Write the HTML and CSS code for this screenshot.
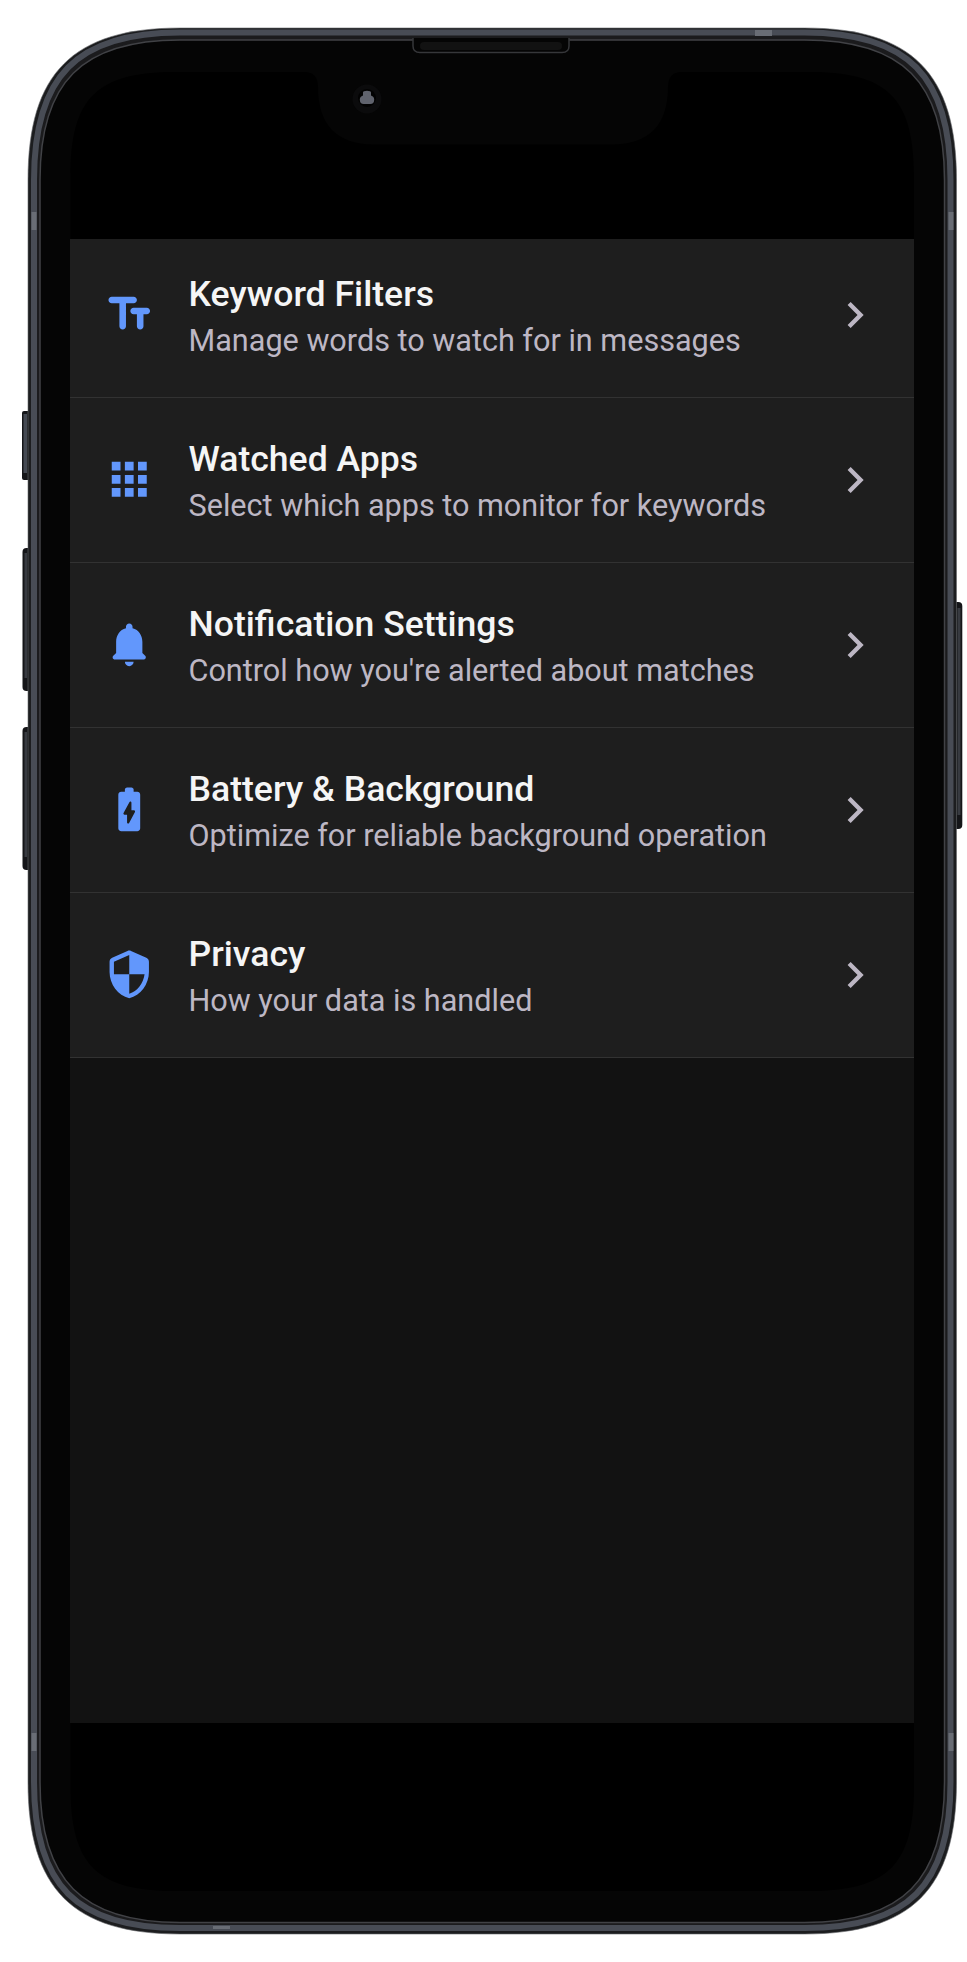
FILE: index.html
```html
<!DOCTYPE html>
<html lang="en">
<head>
<meta charset="utf-8">
<title>Settings</title>
<link rel="stylesheet" href="styles.css">
</head>
<body>
<div class="device">
  <svg class="frame" viewBox="0 0 967 1962" aria-hidden="true">
    <g class="buttons">
      <rect x="22" y="411" width="10" height="69" rx="2"/>
      <rect x="22.5" y="548" width="10" height="143" rx="4"/>
      <rect x="22.5" y="727" width="10" height="143" rx="4"/>
      <rect x="952" y="602" width="10.3" height="227" rx="4"/>
    </g>
    <g class="button-faces">
      <rect x="23.5" y="414" width="3.5" height="59"/>
      <rect class="dim" x="24.5" y="553" width="2.5" height="125"/>
      <rect class="dim" x="24.5" y="732" width="2.5" height="125"/>
      <rect class="dim" x="957.5" y="608" width="3" height="207"/>
    </g>
    <path class="edge" d="M28 180C28 73 73 28 180 28H804.500C911.500 28 956.500 73 956.500 180V1782C956.500 1889 911.500 1934 804.500 1934H180C73 1934 28 1889 28 1782Z"/>
    <path class="band" d="M34 180C34 76.500 76.500 32.500 180 32.500H804.500C908 32.500 950.500 76.500 950.500 180V1782C950.500 1885.500 908 1928 804.500 1928H180C76.500 1928 34 1885.500 34 1782Z"/>
    <path class="lip" d="M40 180C40 82 82 40 180 40H804.500C902.500 40 944.500 82 944.500 180V1782C944.500 1880 902.500 1922.500 804.500 1922.500H180C82 1922.500 40 1880 40 1782Z"/>
    <g class="antenna">
      <rect x="31.500" y="212" width="5" height="18"/>
      <rect x="948.500" y="212" width="5" height="18"/>
      <rect x="31.500" y="1733" width="5" height="18"/>
      <rect x="948.500" y="1733" width="5" height="18"/>
      <rect x="755" y="30" width="17" height="6"/>
      <rect x="213" y="1926" width="17" height="3"/>
    </g>
    <path class="glass" d="M70.500 177C70.500 98 96.500 72 175.500 72H304Q318 72 318 87C318 124 336 144.500 374 144.500H612C650 144.500 668 124 668 87Q668 72 682 72H809C888 72 914 98 914 177V1786C914 1865 888 1891 809 1891H175.500C96.500 1891 70.500 1865 70.500 1786Z"/>
    <path class="speaker" d="M413 38V46Q413 52.500 420 52.500H562Q569 52.500 569 46V38"/>
    <rect class="mesh" x="420" y="42" width="142" height="8" rx="4"/>
    <circle class="lens-ring" cx="367" cy="99" r="14.500"/>
    <circle class="lens" cx="367" cy="98" r="9"/>
    <path class="glint" d="M363 92.500q0-1.800 4-1.800t4 1.800v3q3.200 1 3.200 4 0 4.500-4 4.500h-6.400q-4 0-4-4.500 0-3 3.200-4z"/>
  </svg>

  <main class="screen">
    <ul class="list">
      <li class="row">
        <svg class="icon" viewBox="0 0 24 24"><path d="M2.500 5.500C2.500 6.330 3.170 7 4 7h3.500v10.500c0 .83.67 1.500 1.500 1.500s1.500-.67 1.500-1.500V7H14c.83 0 1.500-.67 1.500-1.500S14.830 4 14 4H4c-.83 0-1.500.67-1.500 1.500zM20 9h-6c-.83 0-1.500.67-1.500 1.500S13.170 12 14 12h1.500v5.500c0 .83.67 1.500 1.500 1.500s1.500-.67 1.500-1.500V12H20c.83 0 1.500-.67 1.500-1.500S20.830 9 20 9z"/></svg>
        <div class="text"><h2 class="title">Keyword Filters</h2><p class="subtitle">Manage words to watch for in messages</p></div>
        <svg class="chevron" viewBox="0 0 24 24"><path d="M10 6 8.590 7.410 13.170 12l-4.580 4.590L10 18l6-6z"/></svg>
      </li>
      <li class="row">
        <svg class="icon" viewBox="0 0 24 24"><path d="M4 8h4V4H4v4zm6 12h4v-4h-4v4zm-6 0h4v-4H4v4zm0-6h4v-4H4v4zm6 0h4v-4h-4v4zm6-10v4h4V4h-4zm-6 4h4V4h-4v4zm6 6h4v-4h-4v4zm0 6h4v-4h-4v4z"/></svg>
        <div class="text"><h2 class="title">Watched Apps</h2><p class="subtitle">Select which apps to monitor for keywords</p></div>
        <svg class="chevron" viewBox="0 0 24 24"><path d="M10 6 8.590 7.410 13.170 12l-4.580 4.590L10 18l6-6z"/></svg>
      </li>
      <li class="row">
        <svg class="icon" viewBox="0 0 24 24"><path d="M12 22c1.100 0 2-.9 2-2h-4c0 1.100.89 2 2 2zm6-6v-5c0-3.070-1.630-5.640-4.500-6.320V4c0-.83-.67-1.500-1.500-1.500s-1.500.67-1.500 1.500v.68C7.640 5.360 6 7.920 6 11v5l-1.290 1.290c-.63.63-.19 1.710.7 1.710h13.170c.89 0 1.340-1.080.71-1.710L18 16z"/></svg>
        <div class="text"><h2 class="title">Notification Settings</h2><p class="subtitle">Control how you're alerted about matches</p></div>
        <svg class="chevron" viewBox="0 0 24 24"><path d="M10 6 8.590 7.410 13.170 12l-4.580 4.590L10 18l6-6z"/></svg>
      </li>
      <li class="row">
        <svg class="icon" viewBox="0 0 24 24"><path d="M15.670 4H14V3c0-.55-.45-1-1-1h-2c-.55 0-1 .45-1 1v1H8.330C7.600 4 7 4.600 7 5.330v15.330C7 21.400 7.600 22 8.340 22h7.320c.74 0 1.340-.6 1.340-1.330V5.330C17 4.600 16.400 4 15.670 4zm-1.060 9.240-2.670 5c-.24.45-.94.28-.94-.24V14.500H9.830c-.38 0-.62-.4-.44-.74l2.670-5c.24-.45.94-.28.94.24v3.500h1.170c.37 0 .62.4.44.74z"/></svg>
        <div class="text"><h2 class="title">Battery &amp; Background</h2><p class="subtitle">Optimize for reliable background operation</p></div>
        <svg class="chevron" viewBox="0 0 24 24"><path d="M10 6 8.590 7.410 13.170 12l-4.580 4.590L10 18l6-6z"/></svg>
      </li>
      <li class="row">
        <svg class="icon" viewBox="0 0 24 24"><path d="m11.190 1.360-7 3.110C3.470 4.790 3 5.510 3 6.300V11c0 5.550 3.840 10.740 9 12 5.160-1.260 9-6.450 9-12V6.300c0-.79-.47-1.510-1.190-1.830l-7-3.110c-.51-.23-1.110-.23-1.620 0zM12 11.990h7c-.53 4.120-3.280 7.790-7 8.940V12H5V6.300l7-3.110v8.800z"/></svg>
        <div class="text"><h2 class="title">Privacy</h2><p class="subtitle">How your data is handled</p></div>
        <svg class="chevron" viewBox="0 0 24 24"><path d="M10 6 8.590 7.410 13.170 12l-4.580 4.590L10 18l6-6z"/></svg>
      </li>
    </ul>
  </main>
</div>
</body>
</html>
```
FILE: styles.css
```css
* { box-sizing: border-box; margin: 0; padding: 0; }
body { background: #fff; font-family: Roboto, sans-serif; }

.device {
  position: relative;
  width: 967px;
  height: 1962px;
  padding: 239px 53px 239px 70px;
}
.frame { position: absolute; inset: 0; width: 967px; height: 1962px; }
.buttons { fill: #151619; }
.button-faces { fill: #444952; }
.button-faces .dim { fill: #383b41; }
.edge { fill: #1c1d1f; stroke: #66686b; stroke-width: .6; }
.band { fill: #1b1b1d; stroke: #484c55; stroke-width: 6; }
.lip { fill: #050505; stroke: #414246; stroke-width: 1.5; }
.antenna { fill: #696d75; }
.glass { fill: #000; }
.speaker { fill: #050505; stroke: #36373a; stroke-width: 1.5; }
.mesh { fill: #121212; }
.lens-ring { fill: #0b0b0c; }
.lens { fill: #020202; }
.glint { fill: #60636d; }

.screen {
  position: relative;
  height: 1484px;
  background: #121212;
  overflow: hidden;
}
/* The list is scrolled a few pixels under the top of the screen. */
.list { list-style: none; margin-top: -6.5px; }
.row {
  display: flex;
  align-items: center;
  height: 165px;
  padding: 0 33px 0 32.5px;
  background: #1e1e1e;
  border-bottom: 1.5px solid #323232;
}
.icon { width: 52.500px; height: 52.500px; margin-right: 33.5px; fill: #6297fc; flex: none; }
.text { flex: 1; padding-top: 6px; white-space: nowrap; }
.title { font-size: 35.600px; line-height: 46px; font-weight: 500; color: #f5f5f5; }
.subtitle { font-size: 30.600px; line-height: 48px; font-weight: 400; color: #bdb7c4; }
.chevron { width: 52px; height: 52px; fill: #bdb7c4; flex: none; }
```
